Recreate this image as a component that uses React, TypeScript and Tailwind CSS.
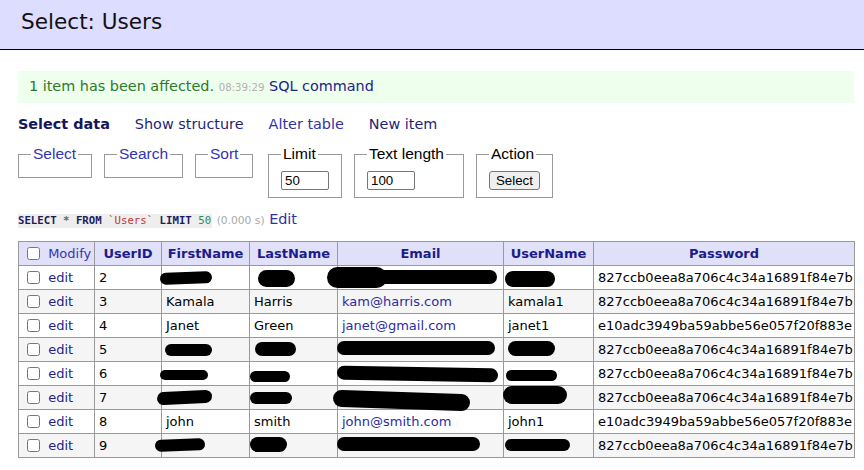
import React from "react";

type Row = {
  id: number;
  first?: string;
  last?: string;
  email?: string;
  user?: string;
  pass: string;
};

const HASH_A = "827ccb0eea8a706c4c34a16891f84e7b";
const HASH_B = "e10adc3949ba59abbe56e057f20f883e";

const rows: Row[] = [
  { id: 2, pass: HASH_A },
  { id: 3, first: "Kamala", last: "Harris", email: "kam@harris.com", user: "kamala1", pass: HASH_A },
  { id: 4, first: "Janet", last: "Green", email: "janet@gmail.com", user: "janet1", pass: HASH_B },
  { id: 5, pass: HASH_A },
  { id: 6, pass: HASH_A },
  { id: 7, pass: HASH_A },
  { id: 8, first: "john", last: "smith", email: "john@smith.com", user: "john1", pass: HASH_B },
  { id: 9, pass: HASH_A },
];

// marker scribbles over the redacted cells (table coords)
const blobs = [
  "left-[142px] top-[31px] w-[52px] h-[12px] -rotate-2",
  "left-[240px] top-[29px] w-[37px] h-[17px]",
  "left-[309px] top-[26px] w-[60px] h-[21px]",
  "left-[320px] top-[29px] w-[159px] h-[14px]",
  "left-[487px] top-[30px] w-[50px] h-[16px]",

  "left-[147px] top-[103px] w-[47px] h-[12px]",
  "left-[237px] top-[101px] w-[41px] h-[14px]",
  "left-[319px] top-[100px] w-[158px] h-[14px]",
  "left-[490px] top-[100px] w-[47px] h-[15px]",

  "left-[142px] top-[129px] w-[48px] h-[10px]",
  "left-[232px] top-[130px] w-[40px] h-[11px]",
  "left-[319px] top-[126px] w-[161px] h-[14px] rotate-1",
  "left-[488px] top-[129px] w-[51px] h-[11px]",

  "left-[139px] top-[150px] w-[55px] h-[13px] -rotate-3",
  "left-[232px] top-[151px] w-[42px] h-[12px]",
  "left-[315px] top-[151px] w-[137px] h-[17px] rotate-2",
  "left-[485px] top-[145px] w-[64px] h-[18px]",

  "left-[137px] top-[198px] w-[50px] h-[12px] -rotate-2",
  "left-[232px] top-[196px] w-[37px] h-[15px]",
  "left-[319px] top-[196px] w-[143px] h-[14px]",
  "left-[487px] top-[198px] w-[65px] h-[12px]",
];

function Box({
  legend,
  link,
  className,
  children,
}: {
  legend: string;
  link?: boolean;
  className: string;
  children?: React.ReactNode;
}) {
  return (
    <fieldset
      className={`border border-[#999] px-[12px] min-w-0 ${children ? "pt-[8px] pb-[7px]" : "pt-[5px] pb-[9px]"} ${className}`}
    >
      <legend
        className={`px-[2px] leading-[18px] text-[15.5px] ${link ? "text-[#3434b4]" : "text-black"}`}
      >
        {legend}
      </legend>
      {children}
    </fieldset>
  );
}

export default function App() {
  return (
    <div className="w-[864px] h-[470px] bg-white overflow-hidden font-['DejaVu_Sans',Verdana,sans-serif] text-[14.4px] leading-[18px] text-black">
      <div className="h-[50px] bg-[#ddf] border-b border-black pl-[21px] pt-[9px]">
        <h2 className="text-[21.6px] leading-[25px] font-normal text-[#111]">Select: Users</h2>
      </div>

      <div className="pl-[18px] pr-[10px]">
        <div className="mt-[21px] h-[32px] bg-[#efe] flex items-center pl-[11px] text-[#2a7a2a]">
          <span>
            1 item has been affected.{" "}
            <span className="text-[10.2px] text-[#b0b0b0]">08:39:29</span>{" "}
            <a className="text-[#22228c]">SQL command</a>
          </span>
        </div>

        <div className="mt-[12px] h-[18px] flex gap-[25px]">
          <a className="font-bold text-[#15155a]">Select data</a>
          <a className="text-[#1f1f78]">Show structure</a>
          <a className="text-[#3030a8]">Alter table</a>
          <a className="text-[#1f1f78]">New item</a>
        </div>

        <div className="mt-[12px] flex items-start gap-[12px] font-['Liberation_Sans',Arial,sans-serif]">
          <Box legend="Select" link className="w-[74px]" />
          <Box legend="Search" link className="w-[79px]" />
          <Box legend="Sort" link className="w-[58px]" />
          <Box legend="Limit" className="w-[74px] ml-[3px]">
            <input
              defaultValue="50"
              className="block w-[48px] h-[19px] border border-[#767676] rounded-[2px] px-[3px] text-[13.3px] bg-white"
            />
          </Box>
          <Box legend="Text length" className="w-[110px]">
            <input
              defaultValue="100"
              className="block w-[48px] h-[19px] border border-[#767676] rounded-[2px] px-[3px] text-[13.3px] bg-white"
            />
          </Box>
          <Box legend="Action" className="w-[77px]">
            <button className="block h-[19px] px-[6px] bg-[#efefef] border border-[#767676] rounded-[3px] text-[13.3px] leading-none text-black">
              Select
            </button>
          </Box>
        </div>

        <div className="mt-[13px] h-[18px] flex items-center">
          <span>
            <code className="bg-[#eee] font-['DejaVu_Sans_Mono',monospace] font-bold text-[10.7px] leading-[14px] text-[#1b1b5e] inline-block pr-[1px]">
              SELECT <span className="text-[#666]">*</span> FROM{" "}
              <span className="text-[#c83232] font-normal">`Users`</span> LIMIT{" "}
              <span className="text-[#2a8a6a] font-normal">50</span>
            </code>{" "}
            <span className="text-[10.7px] text-[#aaa]">(0.000 s)</span>{" "}
            <a className="text-[#3030a8]">Edit</a>
          </span>
        </div>

        <div className="relative mt-[12px] w-[836px]">
          <table className="w-[836px] table-fixed border-collapse text-[13px] leading-[16px]">
            <colgroup>
              <col className="w-[76px]" />
              <col className="w-[67px]" />
              <col className="w-[88px]" />
              <col className="w-[88px]" />
              <col className="w-[166px]" />
              <col className="w-[90px]" />
              <col className="w-[261px]" />
            </colgroup>
            <thead>
              <tr className="h-[24px] bg-[#e0e0f8]">
                <td className="border border-[#999] px-[4px] py-0 whitespace-nowrap">
                  <input type="checkbox" className="align-middle ml-[4px] mr-[4px] my-0 w-[13px] h-[13px]" />{" "}
                  <a className="text-[#3535b0] align-middle">Modify</a>
                </td>
                {["UserID", "FirstName", "LastName", "Email", "UserName", "Password"].map((h) => (
                  <th key={h} className="border border-[#999] px-[4px] py-0 font-bold text-center text-[#1c1c8c]">
                    {h}
                  </th>
                ))}
              </tr>
            </thead>
            <tbody>
              {rows.map((r, i) => (
                <tr key={r.id} className={`h-[24px] ${i % 2 === 1 ? "bg-[#f5f5f5]" : "bg-white"}`}>
                  <td className="border border-[#999] px-[4px] py-0 whitespace-nowrap">
                    <input type="checkbox" className="align-middle ml-[4px] mr-[4px] my-0 w-[13px] h-[13px]" />{" "}
                    <a className="text-[#1f1f88] align-middle">edit</a>
                  </td>
                  <td className="border border-[#999] px-[4px] py-0">{r.id}</td>
                  <td className="border border-[#999] px-[4px] py-0">{r.first}</td>
                  <td className="border border-[#999] px-[4px] py-0">{r.last}</td>
                  <td className="border border-[#999] px-[4px] py-0">
                    <a className="text-[#2c2ca4]">{r.email}</a>
                  </td>
                  <td className="border border-[#999] px-[4px] py-0">{r.user}</td>
                  <td className="border border-[#999] px-[4px] py-0 whitespace-nowrap overflow-hidden">{r.pass}</td>
                </tr>
              ))}
            </tbody>
          </table>
          {blobs.map((b, i) => (
            <span key={i} className={`absolute bg-black rounded-full ${b}`} />
          ))}
        </div>
      </div>
    </div>
  );
}
